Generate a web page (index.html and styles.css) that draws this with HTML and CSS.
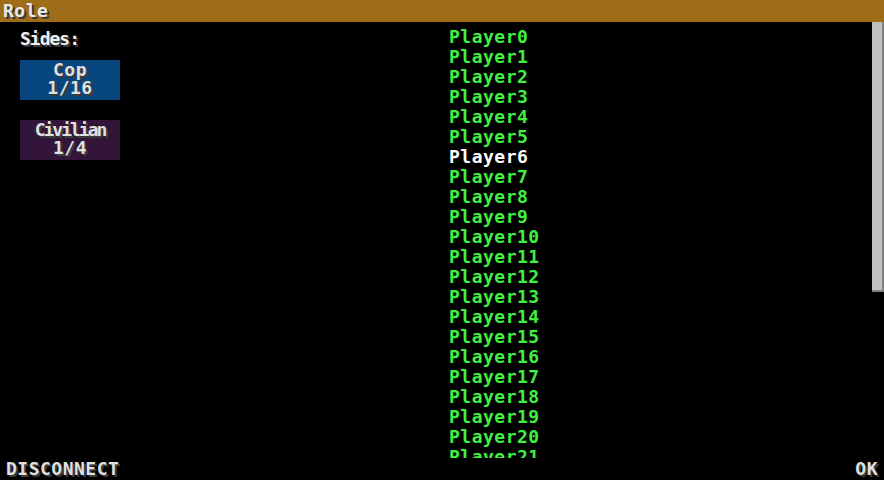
FILE: index.html
```html
<!DOCTYPE html>
<html>
<head>
<meta charset="utf-8">
<link rel="stylesheet" href="styles.css">
</head>
<body>
<div class="screen">
  <div class="header"><span class="title">Role</span></div>
  <div class="main">
    <div class="sides">
      <div class="sides-label">Sides:</div>
      <div class="side side-cop"><div>Cop</div><div>1/16</div></div>
      <div class="side side-civ"><div class="narrow">Civilian</div><div>1/4</div></div>
    </div>
    <div class="players">
      <div class="player">Player0</div>
      <div class="player">Player1</div>
      <div class="player">Player2</div>
      <div class="player">Player3</div>
      <div class="player">Player4</div>
      <div class="player">Player5</div>
      <div class="player player-self">Player6</div>
      <div class="player">Player7</div>
      <div class="player">Player8</div>
      <div class="player">Player9</div>
      <div class="player">Player10</div>
      <div class="player">Player11</div>
      <div class="player">Player12</div>
      <div class="player">Player13</div>
      <div class="player">Player14</div>
      <div class="player">Player15</div>
      <div class="player">Player16</div>
      <div class="player">Player17</div>
      <div class="player">Player18</div>
      <div class="player">Player19</div>
      <div class="player">Player20</div>
      <div class="player">Player21</div>
      <div class="player">Player22</div>
    </div>
    <div class="scrollbar"><div class="thumb"></div></div>
  </div>
  <div class="footer">
    <span class="btn">DISCONNECT</span>
    <span class="btn">OK</span>
  </div>
</div>
</body>
</html>
```

FILE: styles.css
```css
html, body {
  margin: 0;
  padding: 0;
  background: #000;
}
.screen {
  width: 884px;
  height: 480px;
  display: flex;
  flex-direction: column;
  font-family: "DejaVu Sans Mono", "Liberation Mono", monospace;
  font-size: 18px;
  font-weight: bold;
  line-height: 20px;
  letter-spacing: 0.5px;
  color: #e0e0e0;
  overflow: hidden;
}
.header {
  height: 22px;
  background: #9f6c17;
  padding: 1px 0 0 3px;
  box-sizing: border-box;
}
.title {
  color: #e8e8e8;
  text-shadow: 2px 2px 0 #3a3a3a;
}
.main {
  height: 436px;
  display: flex;
}
.sides {
  width: 449px;
  flex: none;
  padding: 7px 0 0 20px;
  box-sizing: border-box;
  display: flex;
  flex-direction: column;
  gap: 20px;
  align-items: flex-start;
}
.sides-label {
  color: #f0f0f0;
  text-shadow: 2px 2px 0 #3a3a3a;
  letter-spacing: -1px;
  margin-bottom: -9px;
}
.side {
  width: 100px;
  height: 40px;
  box-sizing: border-box;
  padding-top: 1px;
  line-height: 18px;
  text-align: center;
  color: #e0e0e0;
  text-shadow: 2px 2px 0 #3a3a3a;
}
.side-cop {
  background: #08467f;
}
.side-civ {
  background: #321538;
}
.narrow {
  letter-spacing: -2px;
}
.players {
  flex: 1;
  padding-top: 5px;
  overflow: hidden;
  height: 436px;
  box-sizing: border-box;
}
.player {
  color: #40f040;
  height: 20px;
  white-space: nowrap;
}
.player-self {
  color: #ffffff;
}
.scrollbar {
  width: 12px;
  flex: none;
}
.thumb {
  height: 270px;
  background: #c0c0c0;
  box-sizing: border-box;
  border-right: 2px solid #808080;
  border-bottom: 2px solid #808080;
}
.footer {
  height: 22px;
  display: flex;
  justify-content: space-between;
  padding: 1px 6px 0 6px;
  box-sizing: border-box;
}
.btn {
  color: #e0e0e0;
  text-shadow: 2px 2px 0 #3a3a3a;
}
```
